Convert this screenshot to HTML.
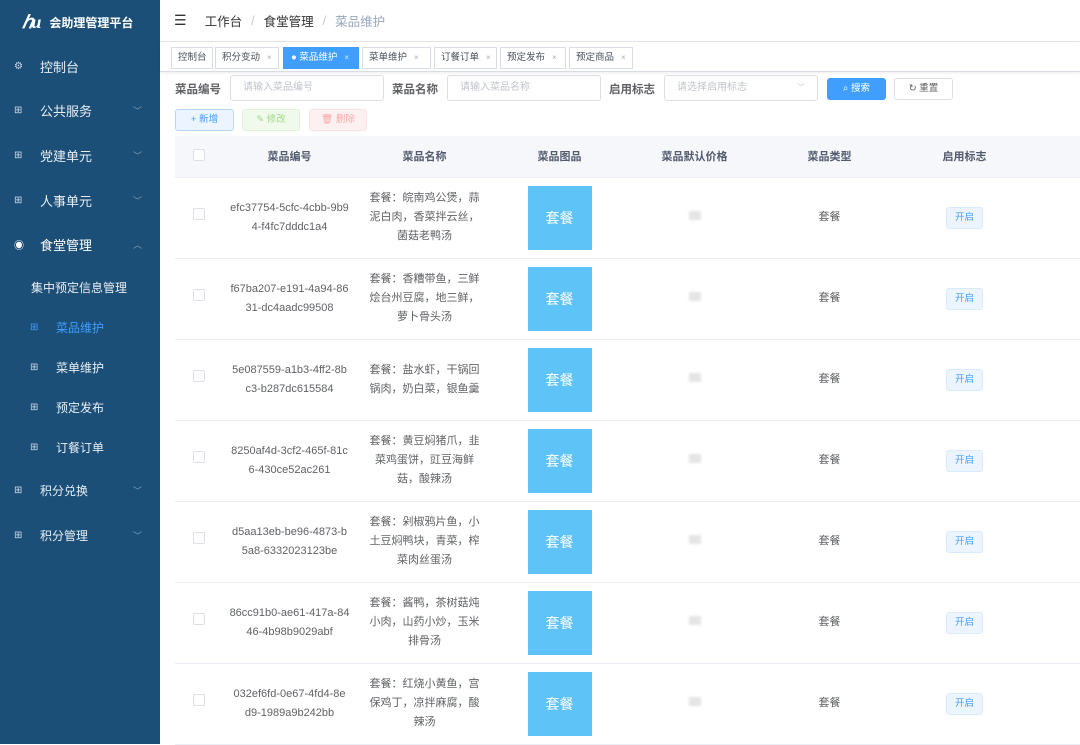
<!DOCTYPE html>
<html><head><meta charset="utf-8"><style>
*{box-sizing:border-box;margin:0;padding:0}
body{width:1080px;height:744px;overflow:hidden;font-family:"Liberation Sans","Noto Sans CJK SC",sans-serif;background:#fff;position:relative;color:#606266}
.side{position:absolute;left:0;top:0;width:160px;height:744px;background:#1b4f78;color:#fff}
.logo{position:absolute;left:22px;top:12px;font-size:12px;font-weight:bold;display:flex;align-items:center}
.logo i{font-style:italic;font-weight:bold;font-size:18px;margin-right:10px;font-family:"Liberation Serif",serif;letter-spacing:-2px}
.mi{position:absolute;left:0;width:160px;font-size:13px;color:#e8eef4;display:flex;align-items:center}
.mi .ic{width:14px;margin-left:14px;margin-right:12px;font-size:10px;color:#cfd9e3}
.mi .ar{position:absolute;right:18px;font-size:9px;color:#7f9bb5}
.sub .ic{margin-left:30px}
.act{color:#409eff}.act .ic{color:#409eff}
.top{position:absolute;left:160px;top:0;width:920px;height:42px;border-bottom:1px solid #e6e6e6;display:flex;align-items:center;font-size:12.5px;color:#303133}
.tags{position:absolute;left:160px;top:42px;width:920px;height:30px;border-bottom:1px solid #d8dce5;box-shadow:0 1px 3px rgba(0,0,0,.08)}
.tag{position:absolute;top:5px;height:22px;border:1px solid #d8dce5;font-size:9.5px;line-height:20px;padding:0 0 0 6px;color:#495060;background:#fff;white-space:nowrap}
.tag b{font-weight:normal;color:#aaa;margin-left:7px;font-size:8px}
.tag.on{background:#409eff;border-color:#409eff;color:#fff;padding-left:7px}
.tag.on b{color:#dbeaff}
.lbl{position:absolute;top:81px;font-size:11.5px;font-weight:bold;color:#606266}
.inp{position:absolute;top:75px;height:26px;border:1px solid #dcdfe6;border-radius:3px;font-size:10px;color:#c0c4cc;line-height:24px;padding-left:12px}
.btn{position:absolute;height:22px;border-radius:3px;font-size:9.5px;line-height:20px;text-align:center;border:1px solid}
table{position:absolute;left:175px;top:136px;width:905px;border-collapse:collapse;font-size:11px}
th{height:41px;background:#f5f7fa;color:#515a6e;font-weight:bold;font-size:11px;border-bottom:1px solid #ebeef5}
td{height:81px;border-bottom:1px solid #ebeef5;text-align:center;color:#606266;line-height:19px}
.cb{display:inline-block;width:12px;height:12px;border:1px solid #dcdfe6;border-radius:2px;background:#fff}
.img{width:64px;height:64px;background:#5ec3f7;color:#fff;font-size:14px;line-height:64px;margin:0 auto}
.tg{display:inline-block;width:37px;height:22px;background:#ecf5ff;border:1px solid #d9ecff;border-radius:3px;color:#409eff;font-size:9.5px;line-height:20px}
.blur{display:inline-block;width:12px;height:9px;background:#e5e5e5;filter:blur(1px)}
</style></head><body>
<div class="side">
<div class="logo"><i>ℎu</i>会助理管理平台</div>
<div class="mi" style="top:56px;height:20px"><span class="ic">⚙</span>控制台</div>
<div class="mi" style="top:100px;height:20px"><span class="ic">⊞</span>公共服务<span class="ar">﹀</span></div>
<div class="mi" style="top:145px;height:20px"><span class="ic">⊞</span>党建单元<span class="ar">﹀</span></div>
<div class="mi" style="top:190px;height:20px"><span class="ic">⊞</span>人事单元<span class="ar">﹀</span></div>
<div class="mi" style="top:234px;height:20px;color:#fff"><span class="ic" style="color:#fff">◉</span>食堂管理<span class="ar">︿</span></div>
<div class="mi" style="top:277px;height:20px;padding-left:31px;font-size:12px">集中预定信息管理</div>
<div class="mi sub act" style="top:317px;height:20px;font-size:12px"><span class="ic">⊞</span>菜品维护</div>
<div class="mi sub" style="top:357px;height:20px;font-size:12px"><span class="ic">⊞</span>菜单维护</div>
<div class="mi sub" style="top:397px;height:20px;font-size:12px"><span class="ic">⊞</span>预定发布</div>
<div class="mi sub" style="top:437px;height:20px;font-size:12px"><span class="ic">⊞</span>订餐订单</div>
<div class="mi" style="top:480px;height:20px;font-size:12px"><span class="ic">⊞</span>积分兑换<span class="ar">﹀</span></div>
<div class="mi" style="top:525px;height:20px;font-size:12px"><span class="ic">⊞</span>积分管理<span class="ar">﹀</span></div>
</div>
<div class="top"><span style="margin-left:14px;font-size:14px;margin-right:18px">☰</span>工作台<span style="color:#c0c4cc;margin:0 9px">/</span>食堂管理<span style="color:#c0c4cc;margin:0 9px">/</span><span style="color:#97a8be">菜品维护</span></div>
<div class="tags">
<div class="tag" style="left:11px;width:42px">控制台</div>
<div class="tag" style="left:55px;width:64px">积分变动<b>×</b></div>
<div class="tag on" style="left:123px;width:76px">● 菜品维护<b>×</b></div>
<div class="tag" style="left:202px;width:69px">菜单维护<b>×</b></div>
<div class="tag" style="left:274px;width:63px">订餐订单<b>×</b></div>
<div class="tag" style="left:340px;width:66px">预定发布<b>×</b></div>
<div class="tag" style="left:409px;width:64px">预定商品<b>×</b></div>
</div>
<div class="lbl" style="left:175px">菜品编号</div>
<div class="inp" style="left:230px;width:154px">请输入菜品编号</div>
<div class="lbl" style="left:392px">菜品名称</div>
<div class="inp" style="left:447px;width:154px">请输入菜品名称</div>
<div class="lbl" style="left:609px">启用标志</div>
<div class="inp" style="left:664px;width:154px">请选择启用标志<span style="position:absolute;right:12px;font-size:8px">﹀</span></div>
<div class="btn" style="left:827px;top:78px;width:59px;background:#409eff;border-color:#409eff;color:#fff">⌕ 搜索</div>
<div class="btn" style="left:894px;top:78px;width:59px;background:#fff;border-color:#dcdfe6;color:#606266">↻ 重置</div>
<div class="btn" style="left:175px;top:109px;width:59px;background:#ecf5ff;border-color:#b3d8ff;color:#409eff">+ 新增</div>
<div class="btn" style="left:242px;top:109px;width:58px;background:#f0f9eb;border-color:#e1f3d8;color:#a4da89">✎ 修改</div>
<div class="btn" style="left:309px;top:109px;width:58px;background:#fef0f0;border-color:#fde2e2;color:#f9a7a7">🗑 删除</div>
<table>
<colgroup><col style="width:47px"><col style="width:135px"><col style="width:135px"><col style="width:135px"><col style="width:135px"><col style="width:135px"><col style="width:135px"><col></colgroup>
<tr><th><span class="cb"></span></th><th>菜品编号</th><th>菜品名称</th><th>菜品图品</th><th>菜品默认价格</th><th>菜品类型</th><th>启用标志</th><th></th></tr>
<tr><td><span class="cb"></span></td><td>efc37754-5cfc-4cbb-9b9<br>4-f4fc7dddc1a4</td><td>套餐：皖南鸡公煲，蒜<br>泥白肉，香菜拌云丝，<br>菌菇老鸭汤</td><td><div class="img">套餐</div></td><td><span class="blur"></span></td><td>套餐</td><td><span class="tg">开启</span></td><td></td></tr>
<tr><td><span class="cb"></span></td><td>f67ba207-e191-4a94-86<br>31-dc4aadc99508</td><td>套餐：香糟带鱼，三鲜<br>烩台州豆腐，地三鲜，<br>萝卜骨头汤</td><td><div class="img">套餐</div></td><td><span class="blur"></span></td><td>套餐</td><td><span class="tg">开启</span></td><td></td></tr>
<tr><td><span class="cb"></span></td><td>5e087559-a1b3-4ff2-8b<br>c3-b287dc615584</td><td>套餐：盐水虾，干锅回<br>锅肉，奶白菜，银鱼羹</td><td><div class="img">套餐</div></td><td><span class="blur"></span></td><td>套餐</td><td><span class="tg">开启</span></td><td></td></tr>
<tr><td><span class="cb"></span></td><td>8250af4d-3cf2-465f-81c<br>6-430ce52ac261</td><td>套餐：黄豆焖猪爪，韭<br>菜鸡蛋饼，豇豆海鲜<br>菇，酸辣汤</td><td><div class="img">套餐</div></td><td><span class="blur"></span></td><td>套餐</td><td><span class="tg">开启</span></td><td></td></tr>
<tr><td><span class="cb"></span></td><td>d5aa13eb-be96-4873-b<br>5a8-6332023123be</td><td>套餐：剁椒鸦片鱼，小<br>土豆焖鸭块，青菜，榨<br>菜肉丝蛋汤</td><td><div class="img">套餐</div></td><td><span class="blur"></span></td><td>套餐</td><td><span class="tg">开启</span></td><td></td></tr>
<tr><td><span class="cb"></span></td><td>86cc91b0-ae61-417a-84<br>46-4b98b9029abf</td><td>套餐：酱鸭，茶树菇炖<br>小肉，山药小炒，玉米<br>排骨汤</td><td><div class="img">套餐</div></td><td><span class="blur"></span></td><td>套餐</td><td><span class="tg">开启</span></td><td></td></tr>
<tr><td><span class="cb"></span></td><td>032ef6fd-0e67-4fd4-8e<br>d9-1989a9b242bb</td><td>套餐：红烧小黄鱼，宫<br>保鸡丁，凉拌麻腐，酸<br>辣汤</td><td><div class="img">套餐</div></td><td><span class="blur"></span></td><td>套餐</td><td><span class="tg">开启</span></td><td></td></tr>
</table>
</body></html>
